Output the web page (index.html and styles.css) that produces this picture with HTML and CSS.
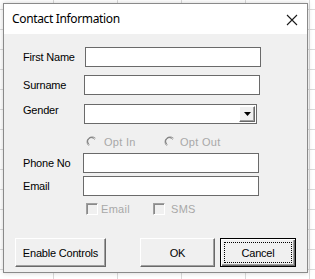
FILE: index.html
```html
<!DOCTYPE html>
<html>
<head>
<meta charset="utf-8">
<link rel="stylesheet" href="styles.css">
</head>
<body>
<div class="dialog">
  <div class="titlebar">
    <span class="title">Contact Information</span>
    <span class="close">
      <svg width="12" height="12" viewBox="0 0 12 12"><path d="M1 1 L11 11 M11 1 L1 11" stroke="#1a1a1a" stroke-width="1.1" fill="none"/></svg>
    </span>
  </div>
  <div class="body">
    <div class="form">
      <div class="row r-first"><span class="label">First Name</span><div class="textbox w-first"></div></div>
      <div class="row r-surname"><span class="label">Surname</span><div class="textbox w-surname"></div></div>
      <div class="row r-gender"><span class="label label-up">Gender</span>
        <div class="combo">
          <div class="combo-btn"><svg width="7" height="4" viewBox="0 0 7 4"><path d="M0 0 H7 L3.5 4 Z" fill="#000"/></svg></div>
        </div>
      </div>
      <div class="row r-options"><span></span>
        <div class="choices">
          <span class="choice c-optin">
            <svg class="radio" width="12" height="12" viewBox="0 0 12 12"><path d="M9.5 2.2 A5 5 0 1 0 2.6 9.6" stroke="#a0a0a0" stroke-width="1" fill="none"/><path d="M8.6 3.3 A3.8 3.8 0 1 0 3.4 8.6" stroke="#6f6f6f" stroke-width="1" fill="none"/></svg>
            <span class="dis">Opt In</span>
          </span>
          <span class="choice c-optout">
            <svg class="radio" width="12" height="12" viewBox="0 0 12 12"><path d="M9.5 2.2 A5 5 0 1 0 2.6 9.6" stroke="#a0a0a0" stroke-width="1" fill="none"/><path d="M8.6 3.3 A3.8 3.8 0 1 0 3.4 8.6" stroke="#6f6f6f" stroke-width="1" fill="none"/></svg>
            <span class="dis">Opt Out</span>
          </span>
        </div>
      </div>
      <div class="row r-phone"><span class="label">Phone No</span><div class="textbox w-phone"></div></div>
      <div class="row r-email"><span class="label">Email</span><div class="textbox w-email"></div></div>
      <div class="row r-checks"><span></span>
        <div class="choices">
          <span class="choice c-email"><span class="checkbox"></span><span class="dis">Email</span></span>
          <span class="choice c-sms"><span class="checkbox"></span><span class="dis">SMS</span></span>
        </div>
      </div>
    </div>
    <div class="buttons">
      <button class="btn btn-enable">Enable Controls</button>
      <button class="btn btn-ok">OK</button>
      <button class="btn btn-cancel"><span class="focus">Cancel</span></button>
    </div>
  </div>
</div>
</body>
</html>
```

FILE: styles.css
```css
html, body {
  margin: 0;
  padding: 0;
}
body {
  width: 315px;
  height: 279px;
  overflow: hidden;
  background-color: #ffffff;
  background-image:
    linear-gradient(to right, #dadada 1px, transparent 1px),
    linear-gradient(to bottom, #dadada 1px, transparent 1px);
  background-size: 64px 100%, 100% 20px;
  background-position: 53px 0, 0 9px;
  font-family: "Liberation Sans", Arial, sans-serif;
  font-size: 11px;
  letter-spacing: -0.2px;
  color: #000;
}
.dialog {
  margin: 3px 0 0 3px;
  width: 303px;
  height: 268px;
  border: 1px solid #8a8a8a;
  background: #f0f0f0;
  box-shadow: 0 0 5px rgba(0,0,0,0.18);
  display: flex;
  flex-direction: column;
}
.titlebar {
  height: 30px;
  background: #ffffff;
  display: flex;
  align-items: center;
  justify-content: space-between;
  padding: 0 9px 0 8px;
}
.title {
  font-family: "Noto Sans", "Open Sans", sans-serif;
  font-size: 12px;
  letter-spacing: -0.35px;
  color: #000;
  margin-top: -1px;
}
.close {
  display: flex;
  width: 12px;
  height: 12px;
  margin-top: 1px;
}
.body {
  flex: 1;
  display: flex;
  flex-direction: column;
  padding: 13px 0 0 19px;
}
.form {
  display: flex;
  flex-direction: column;
}
.row {
  display: grid;
  grid-template-columns: 61px auto;
  align-items: center;
}
.label {
  line-height: 13px;
}
.label-up {
  padding-bottom: 7px;
}
.r-first { height: 20px; }
.r-surname { height: 20px; margin-top: 8px; }
.r-gender { height: 20px; margin-top: 9px; }
.r-options { height: 14px; margin-top: 11px; }
.r-phone { height: 20px; margin-top: 4px; }
.r-email { height: 20px; margin-top: 3px; }
.r-checks { height: 14px; margin-top: 6px; }
.textbox {
  box-sizing: border-box;
  height: 20px;
  background: #ffffff;
  border: 1px solid #6a6a6a;
}
.w-first { width: 176px; margin-left: 1px; }
.w-surname { width: 176px; }
.w-phone { width: 176px; margin-left: -1px; }
.w-email { width: 176px; margin-left: -1px; }
.combo {
  box-sizing: border-box;
  width: 173px;
  height: 20px;
  background: #ffffff;
  border: 1px solid #6a6a6a;
  display: flex;
  justify-content: flex-end;
  padding: 1px;
}
.combo-btn {
  box-sizing: border-box;
  width: 16px;
  height: 100%;
  background: #f0f0f0;
  border-top: 1px solid #ffffff;
  border-left: 1px solid #ffffff;
  border-right: 1px solid #696969;
  border-bottom: 1px solid #696969;
  box-shadow: inset -1px -1px 0 #a0a0a0;
  display: flex;
  align-items: center;
  justify-content: center;
}
.choices {
  display: flex;
  align-items: center;
  padding-left: 2px;
}
.choice {
  display: flex;
  align-items: center;
  color: #a8a8a8;
}
.c-optin { width: 78px; gap: 6px; }
.c-optout { gap: 4px; }
.c-email { width: 67px; gap: 3px; }
.c-sms { gap: 6px; }
.dis {
  letter-spacing: 0.3px;
  line-height: 13px;
}
.checkbox {
  box-sizing: border-box;
  width: 12px;
  height: 12px;
  border-top: 1px solid #a0a0a0;
  border-left: 1px solid #a0a0a0;
  border-right: 1px solid #ffffff;
  border-bottom: 1px solid #ffffff;
  box-shadow: inset 1px 1px 0 #8a8a8a;
}
.buttons {
  display: flex;
  margin-top: 22px;
  margin-left: -8px;
}
.btn {
  box-sizing: border-box;
  height: 29px;
  font-family: "Liberation Sans", Arial, sans-serif;
  font-size: 11px;
  letter-spacing: -0.2px;
  color: #000;
  background: #f0f0f0;
  border-top: 1px solid #ffffff;
  border-left: 1px solid #ffffff;
  border-right: 1px solid #696969;
  border-bottom: 1px solid #696969;
  box-shadow: inset -1px -1px 0 #a0a0a0;
  padding: 0;
  display: flex;
  align-items: center;
  justify-content: center;
}
.btn-enable { width: 91px; }
.btn-ok { width: 75px; margin-left: 34px; }
.btn-cancel {
  width: 76px;
  margin-left: 5px;
  border: 1px solid #000;
  box-shadow: inset 1px 1px 0 #ffffff, inset -1px -1px 0 #696969, inset -2px -2px 0 #a0a0a0;
  padding: 3px;
}
.focus {
  box-sizing: border-box;
  width: 100%;
  height: 100%;
  border: 1px dotted #000;
  display: flex;
  align-items: center;
  justify-content: center;
}
```
